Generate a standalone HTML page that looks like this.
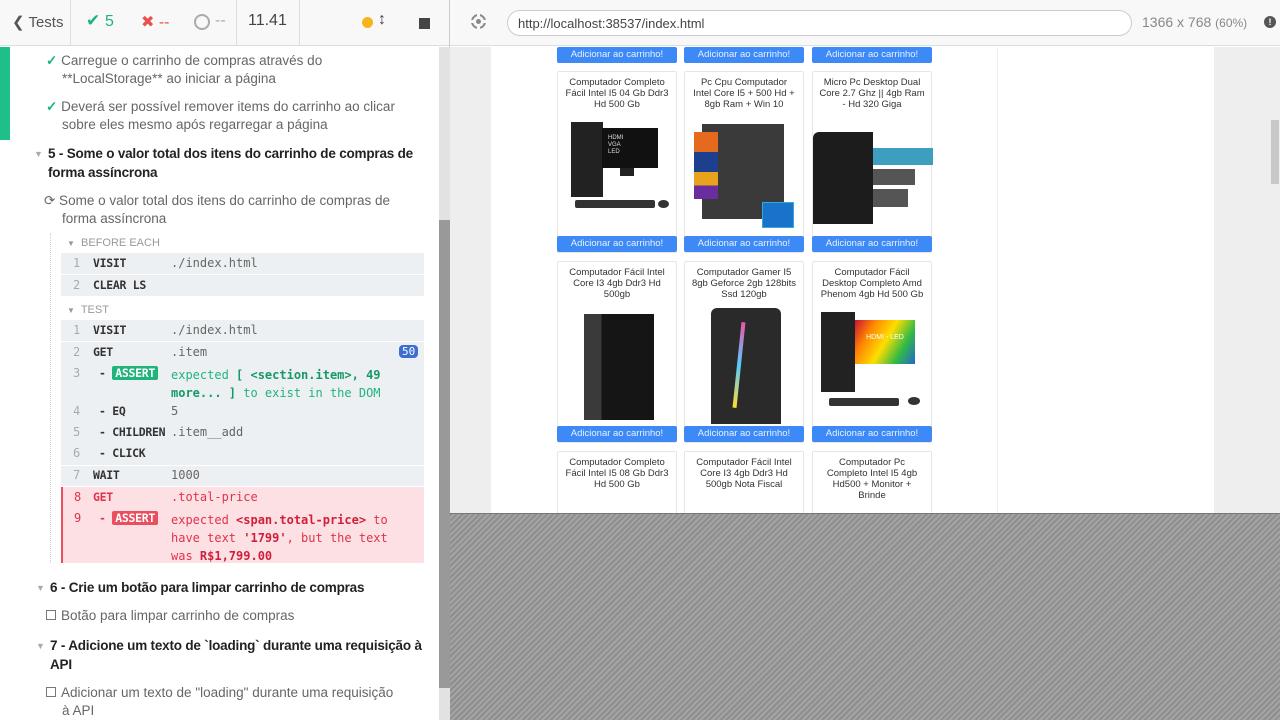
<!DOCTYPE html>
<html><head><meta charset="utf-8"><style>
*{box-sizing:border-box;margin:0;padding:0}
body{width:1280px;height:720px;overflow:hidden;position:relative;font-family:"Liberation Sans",sans-serif;background:#fff}
.a{position:absolute}
.hdr{top:0;height:46px;background:#f8f8f8;border-bottom:1px solid #ddd}
.mono{font-family:"DejaVu Sans Mono","Liberation Mono",monospace;font-size:12px}
.row{position:absolute;left:61px;width:363px;background:#edf0f3;color:#444}
.num{position:absolute;left:12px;color:#aaa}
.cmd{position:absolute;left:32px;font-weight:bold;color:#333;font-size:11.5px;letter-spacing:-0.3px}
.arg{position:absolute;left:110px;color:#666}
.tag{display:inline-block;color:#fff;padding:0 3px;border-radius:2px;font-weight:bold}
.t{font-size:13.5px;color:#666;line-height:18px}
.h{font-size:13.5px;color:#222;font-weight:bold;line-height:19px;letter-spacing:-0.2px}
.card{position:absolute;width:120px;background:#fff;border:1px solid #e6e6e6;border-radius:2px}
.card .tt{font-size:9.5px;color:#333;text-align:center;line-height:11px;padding:5px 6px 0}
.btn{position:absolute;width:120px;height:16px;background:#3d8af7;color:#e8f0ff;font-size:9.5px;text-align:center;line-height:16px;border-radius:2px}
</style></head><body>
<div class="a hdr" style="left:0;width:450px"></div>
<div class="a" style="left:70px;top:0;width:1px;height:46px;background:#ddd"></div>
<div class="a" style="left:236px;top:0;width:1px;height:46px;background:#ddd"></div>
<div class="a" style="left:299px;top:0;width:1px;height:46px;background:#ddd"></div>
<div class="a" style="left:449px;top:0;width:1px;height:720px;background:#ccc"></div>
<div class="a" style="left:12px;top:13px;font-size:15px;color:#555">&#10094; Tests</div>
<div class="a" style="left:86px;top:11px;font-size:17px;color:#1eb47c">&#10004; <span style="font-size:16px">5</span></div>
<div class="a" style="left:141px;top:12px;font-size:16px;color:#e94f4f">&#10006; --</div>
<div class="a" style="left:194px;top:14px;width:16px;height:16px;border:2px solid #aaa;border-radius:50%"></div>
<div class="a" style="left:215px;top:12px;font-size:16px;color:#aaa">--</div>
<div class="a" style="left:248px;top:12px;font-size:16px;color:#444">11.41</div>
<div class="a" style="left:362px;top:17px;width:11px;height:11px;border-radius:50%;background:#f8b31c"></div>
<div class="a" style="left:378px;top:11px;font-size:16px;color:#444;font-weight:bold">&#8597;</div>
<div class="a" style="left:419px;top:18px;width:11px;height:11px;background:#444"></div>
<div class="a" style="left:0;top:47px;width:10px;height:93px;background:#1ebf89"></div>
<div class="a" style="left:439px;top:47px;width:11px;height:673px;background:#e2e2e2"></div>
<div class="a" style="left:439px;top:220px;width:11px;height:468px;background:#999"></div>
<div class="a t" style="left:46px;top:52px;width:380px"><span style="color:#1eb47c;font-weight:bold">&#10003;</span> Carregue o carrinho de compras através do<br><span style="padding-left:16px">**LocalStorage** ao iniciar a página</span></div>
<div class="a t" style="left:46px;top:98px;width:390px"><span style="color:#1eb47c;font-weight:bold">&#10003;</span> Deverá ser possível remover items do carrinho ao clicar<br><span style="padding-left:16px">sobre eles mesmo após regarregar a página</span></div>
<div class="a" style="left:34px;top:149px;font-size:9px;color:#aaa">&#9660;</div>
<div class="a h" style="left:48px;top:144px;width:390px;white-space:nowrap">5 - Some o valor total dos itens do carrinho de compras de<br>forma assíncrona</div>
<div class="a t" style="left:44px;top:192px;width:380px">&#10227; Some o valor total dos itens do carrinho de compras de<br><span style="padding-left:18px">forma assíncrona</span></div>
<div class="a" style="left:50px;top:233px;height:330px;border-left:1px dotted #ccc"></div>
<div class="a" style="left:67px;top:237px;font-size:11px;color:#999"><span style="font-size:8px">&#9660;</span>&nbsp; BEFORE EACH</div>
<div class="row mono" style="top:253px;height:21px"><span class="num" style="top:3px">1</span><span class="cmd" style="top:3px">VISIT</span><span class="arg" style="top:3px">./index.html</span></div>
<div class="row mono" style="top:275px;height:21px"><span class="num" style="top:3px">2</span><span class="cmd" style="top:3px">CLEAR LS</span></div>
<div class="a" style="left:67px;top:304px;font-size:11px;color:#999"><span style="font-size:8px">&#9660;</span>&nbsp; TEST</div>
<div class="row mono" style="top:320px;height:21px"><span class="num" style="top:3px">1</span><span class="cmd" style="top:3px">VISIT</span><span class="arg" style="top:3px">./index.html</span></div>
<div class="row mono" style="top:342px;height:123px">
<span class="num" style="top:3px">2</span><span class="cmd" style="top:3px">GET</span><span class="arg" style="top:3px">.item</span>
<span class="a" style="left:338px;top:3px;background:#3d6fd0;color:#fff;font-size:11px;padding:0 3px;border-radius:4px">50</span>
<span class="num" style="top:24px">3</span><span class="cmd" style="top:24px;left:38px">- <span class="tag" style="background:#1eb47c">ASSERT</span></span>
<span class="arg" style="top:24px;color:#1eb47c;line-height:18px;width:250px">expected <b style="color:#159a67">[ &lt;section.item&gt;, 49 more... ]</b> to exist in the DOM</span>
<span class="num" style="top:62px">4</span><span class="cmd" style="top:62px;left:38px">- EQ</span><span class="arg" style="top:62px">5</span>
<span class="num" style="top:83px">5</span><span class="cmd" style="top:83px;left:38px">- CHILDREN</span><span class="arg" style="top:83px">.item__add</span>
<span class="num" style="top:104px">6</span><span class="cmd" style="top:104px;left:38px">- CLICK</span>
</div>
<div class="row mono" style="top:466px;height:20px"><span class="num" style="top:2px">7</span><span class="cmd" style="top:2px">WAIT</span><span class="arg" style="top:2px">1000</span></div>
<div class="row mono" style="top:487px;height:76px;background:#fde0e3;border-left:2px solid #e94f5e;color:#e0334a">
<span class="num" style="top:3px;color:#e0334a;left:11px">8</span><span class="cmd" style="top:3px;color:#e0334a;left:30px">GET</span><span class="arg" style="top:3px;color:#e0334a;left:108px">.total-price</span>
<span class="num" style="top:24px;color:#e0334a;left:11px">9</span><span class="cmd" style="top:24px;left:36px;color:#e0334a">- <span class="tag" style="background:#e94f5e">ASSERT</span></span>
<span class="arg" style="top:24px;left:108px;color:#e0334a;line-height:18px;width:240px">expected <b style="color:#d01f3a">&lt;span.total-price&gt;</b> to have text <b style="color:#d01f3a">'1799'</b>, but the text was <b style="color:#d01f3a">R$1,799.00</b></span>
</div>
<div class="a" style="left:36px;top:583px;font-size:9px;color:#aaa">&#9660;</div>
<div class="a h" style="left:50px;top:578px;white-space:nowrap">6 - Crie um botão para limpar carrinho de compras</div>
<div class="a t" style="left:46px;top:607px"><span style="display:inline-block;width:10px;height:10px;border:1px solid #777;margin-right:5px"></span>Botão para limpar carrinho de compras</div>
<div class="a" style="left:36px;top:641px;font-size:9px;color:#aaa">&#9660;</div>
<div class="a h" style="left:50px;top:636px;width:390px;white-space:nowrap">7 - Adicione um texto de `loading` durante uma requisição à<br>API</div>
<div class="a t" style="left:46px;top:684px;width:380px"><span style="display:inline-block;width:10px;height:10px;border:1px solid #777;margin-right:5px"></span>Adicionar um texto de "loading" durante uma requisição<br><span style="padding-left:16px">à API</span></div>
<div class="a hdr" style="left:450px;width:830px"></div>
<div class="a" style="left:471px;top:14px;width:15px;height:15px;border:2px solid #888;border-radius:50%"></div>
<div class="a" style="left:477px;top:12px;width:3px;height:19px;background:#f8f8f8"></div>
<div class="a" style="left:469px;top:20px;width:19px;height:3px;background:#f8f8f8"></div>
<div class="a" style="left:476px;top:19px;width:5px;height:5px;border-radius:50%;background:#888"></div>
<div class="a" style="left:507px;top:10px;width:625px;height:26px;border:1px solid #ccc;border-radius:13px;background:#fff;font-size:13px;color:#444;padding:5px 10px">http://localhost:38537/index.html</div>
<div class="a" style="left:1142px;top:14px;font-size:14px;color:#888">1366 x 768 <span style="font-size:12px">(60%)</span></div>
<div class="a" style="left:1264px;top:16px;width:12px;height:12px;border-radius:50%;background:#555;color:#fff;font-size:9px;text-align:center;line-height:12px;font-weight:bold">!</div>
<div class="a" style="left:450px;top:47px;width:830px;height:466px;background:#eee"></div>
<div class="a" style="left:491px;top:47px;width:723px;height:466px;background:#fff"></div>
<div class="a" style="left:997px;top:47px;width:1px;height:466px;background:#f0f0f0"></div>
<div class="a" style="left:1271px;top:120px;width:8px;height:64px;background:#c8c8c8"></div>
<div class="btn" style="left:557px;top:47px">Adicionar ao carrinho!</div>
<div class="btn" style="left:684px;top:47px">Adicionar ao carrinho!</div>
<div class="btn" style="left:812px;top:47px">Adicionar ao carrinho!</div>
<div class="card" style="left:557px;top:71px;height:182px"><div class="tt">Computador Completo Fácil Intel I5 04 Gb Ddr3 Hd 500 Gb</div>
<div class="a" style="left:13px;top:50px;width:32px;height:75px;background:#222"></div><div class="a" style="left:44px;top:56px;width:56px;height:40px;background:#111;color:#ddd;font-size:6px;padding:7px 0 0 6px;line-height:7px">HDMI<br>VGA<br>LED</div><div class="a" style="left:62px;top:96px;width:14px;height:8px;background:#222"></div><div class="a" style="left:17px;top:128px;width:80px;height:8px;background:#333;border-radius:2px"></div><div class="a" style="left:100px;top:128px;width:11px;height:8px;background:#333;border-radius:50%"></div></div>
<div class="card" style="left:684px;top:71px;height:182px"><div class="tt">Pc Cpu Computador Intel Core I5 + 500 Hd + 8gb Ram + Win 10</div>
<div class="a" style="left:17px;top:52px;width:82px;height:95px;background:#3a3a3a"></div><div class="a" style="left:9px;top:60px;width:24px;height:67px;background:linear-gradient(#e66a1e 0 30%,#1d3f8f 30% 60%,#e8a21b 60% 80%,#6b2ca0 80%)"></div><div class="a" style="left:77px;top:130px;width:32px;height:26px;background:#1a73c8;border:1px solid #3ad"></div></div>
<div class="card" style="left:812px;top:71px;height:182px"><div class="tt">Micro Pc Desktop Dual Core 2.7 Ghz || 4gb Ram - Hd 320 Giga</div>
<div class="a" style="left:0;top:60px;width:60px;height:92px;background:#1c1c1c;border-radius:6px 0 0 0"></div><div class="a" style="left:60px;top:76px;width:60px;height:17px;background:#3e9ec0"></div><div class="a" style="left:60px;top:97px;width:42px;height:16px;background:#555"></div><div class="a" style="left:60px;top:117px;width:35px;height:18px;background:#555"></div></div>
<div class="btn" style="left:557px;top:236px">Adicionar ao carrinho!</div>
<div class="btn" style="left:684px;top:236px">Adicionar ao carrinho!</div>
<div class="btn" style="left:812px;top:236px">Adicionar ao carrinho!</div>
<div class="card" style="left:557px;top:261px;height:182px"><div class="tt">Computador Fácil Intel Core I3 4gb Ddr3 Hd 500gb</div>
<div class="a" style="left:26px;top:52px;width:70px;height:106px;background:linear-gradient(90deg,#3a3a3a 0 25%,#151515 25%)"></div></div>
<div class="card" style="left:684px;top:261px;height:182px"><div class="tt">Computador Gamer I5 8gb Geforce 2gb 128bits Ssd 120gb</div>
<div class="a" style="left:26px;top:46px;width:70px;height:116px;background:#2a2a2a;border-radius:6px 6px 0 0"></div><div class="a" style="left:52px;top:60px;width:4px;height:86px;background:linear-gradient(#e5a,#5cf,#fd3);transform:rotate(6deg)"></div></div>
<div class="card" style="left:812px;top:261px;height:182px"><div class="tt">Computador Fácil Desktop Completo Amd Phenom 4gb Hd 500 Gb</div>
<div class="a" style="left:8px;top:50px;width:34px;height:80px;background:#222"></div><div class="a" style="left:42px;top:58px;width:60px;height:44px;background:linear-gradient(120deg,#c13,#f80,#fd0,#3b4,#26c);color:#fff;font-size:7px;text-align:center;padding-top:14px">HDMI - LED</div><div class="a" style="left:16px;top:136px;width:70px;height:8px;background:#333;border-radius:2px"></div><div class="a" style="left:95px;top:135px;width:12px;height:8px;background:#333;border-radius:50%"></div></div>
<div class="btn" style="left:557px;top:426px">Adicionar ao carrinho!</div>
<div class="btn" style="left:684px;top:426px">Adicionar ao carrinho!</div>
<div class="btn" style="left:812px;top:426px">Adicionar ao carrinho!</div>
<div class="card" style="left:557px;top:451px;height:70px"><div class="tt">Computador Completo Fácil Intel I5 08 Gb Ddr3 Hd 500 Gb</div></div>
<div class="card" style="left:684px;top:451px;height:70px"><div class="tt">Computador Fácil Intel Core I3 4gb Ddr3 Hd 500gb Nota Fiscal</div></div>
<div class="card" style="left:812px;top:451px;height:70px"><div class="tt">Computador Pc Completo Intel I5 4gb Hd500 + Monitor + Brinde</div></div>
<div class="a" style="left:450px;top:513px;width:830px;height:207px;background:repeating-linear-gradient(135deg,#8e8e8e 0 2px,#a4a4a4 2px 4px);border-top:1px solid #777"></div>
</body></html>
